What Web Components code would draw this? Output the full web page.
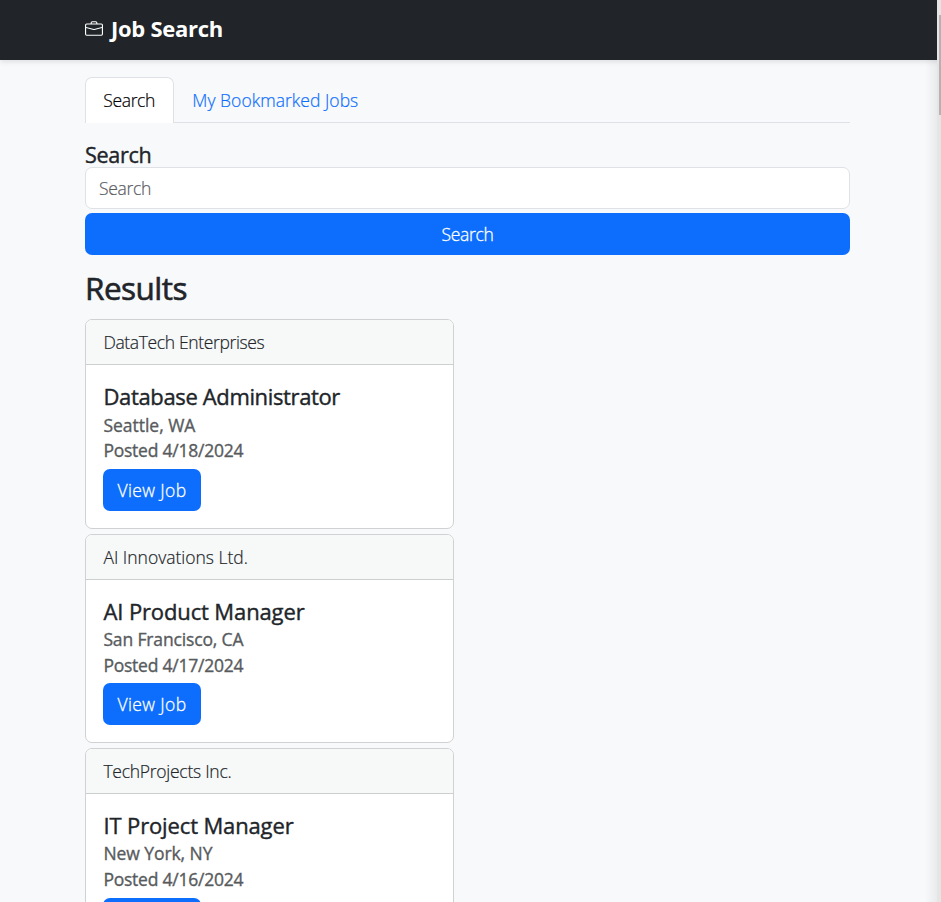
<!DOCTYPE html>
<html lang="en">
<head>
<meta charset="utf-8">
<title>Job Search</title>
<style>
html,body{margin:0;height:902px;overflow:hidden}
body{background:#f8f9fb;color:#212529;font:300 17.5px/27px "Open Sans","Noto Sans",sans-serif;-webkit-text-stroke:.2px}
</style>
</head>
<body>
<job-app></job-app>
<script>
const define = (name, html, setup) => {
  const template = document.createElement('template');
  template.innerHTML = html;
  customElements.define(name, class extends HTMLElement {
    constructor() {
      super();
      this.attachShadow({mode: 'open'}).append(template.content.cloneNode(true));
    }
    connectedCallback() { if (setup) setup(this, this.shadowRoot); }
  });
};

// Label whose letter spacing is tuned so that it spans the given width.
define('fit-label', `<style>
:host{display:inline-block;white-space:nowrap}
span{display:inline-block;white-space:nowrap}
</style><span><slot></slot></span>`, (host, root) => {
  const span = root.querySelector('span');
  const n = host.textContent.trim().length;
  const natural = span.getBoundingClientRect().width;
  const wanted = Number(host.getAttribute('width'));
  if (wanted && natural) {
    const s = (wanted - natural) / n;
    span.style.letterSpacing = s.toFixed(3) + 'px';
  }
});

define('app-navbar', `<style>
:host{display:flex;align-items:center;box-sizing:border-box;height:60px;padding:0 0 3px 85px;background:#212529;color:#fff;font-weight:700;font-size:22px;box-shadow:0 2px 5px rgba(0,0,0,.1);position:relative;-webkit-text-stroke:0}
svg{display:block;width:18px;height:18px;margin-right:8px}
</style>
<svg viewBox="0 0 16 16" fill="#fff"><path d="M6.5 1A1.5 1.5 0 0 0 5 2.5V3H1.5A1.5 1.5 0 0 0 0 4.5v8A1.5 1.5 0 0 0 1.5 14h13a1.5 1.5 0 0 0 1.5-1.5v-8A1.5 1.5 0 0 0 14.5 3H11v-.5A1.500 1.500 0 0 0 9.500 1zm0 1h3a.5.5 0 0 1 .5.5V3H6v-.5a.5.5 0 0 1 .5-.5m1.886 6.914L15 7.151V12.500a.5.5 0 0 1-.5.5h-13a.5.5 0 0 1-.5-.5V7.150l6.614 1.764a1.500 1.500 0 0 0 .772 0M1.500 4h13a.5.5 0 0 1 .5.5v1.616L8.129 7.948a.5.5 0 0 1-.258 0L1 6.116V4.500a.5.5 0 0 1 .5-.5"/></svg>
<slot></slot>`);

define('nav-tabs', `<style>
:host{display:flex;box-sizing:border-box;height:46px;border-bottom:1px solid #dee2e6}
</style><slot></slot>`);

define('nav-tab', `<style>
:host{display:block;box-sizing:border-box;height:46px;padding:9px 18px 9px 17.300px;border:1px solid transparent;border-bottom:0;border-radius:7px 7px 0 0;color:#0d6efd;line-height:27px}
:host([active]){color:#000;background:#fff;border-color:#dee2e6}
</style><slot></slot>`);

define('app-button', `<style>
:host{display:block;box-sizing:border-box;height:42px;border-radius:7px;background:#0d6efd;color:#fff;text-align:center;line-height:43px;-webkit-text-stroke:.3px}
</style><slot></slot>`);

define('search-form', `<style>
:host{display:block}
.title{height:26px;line-height:27px;font-size:21.6px;font-weight:500;-webkit-text-stroke:.4px}
.field{box-sizing:border-box;height:42px;padding:7px 13px;border:1px solid #dee2e6;border-radius:7px;background:#fff;color:#595c5f;line-height:27px;margin-bottom:4px}
</style>
<div class="title"><fit-label width="66.500">Search</fit-label></div>
<div class="field"><fit-label width="52">Search</fit-label></div>
<app-button><fit-label width="52">Search</fit-label></app-button>`);

define('job-card', `<style>
:host{display:block;box-sizing:border-box;width:369px;height:209.800px;border:1px solid #cfd1d3;border-radius:7px;background:#fff;overflow:hidden}
header{box-sizing:border-box;height:45px;padding:9px 17.400px;background:#f7f9f9;border-bottom:1px solid #cccfd0;line-height:27px}
section{padding:18px 17px 0}
.title{height:27px;line-height:27px;margin:0 .5px 4.400px;font-size:22px;font-weight:500;-webkit-text-stroke:.4px}
.sub{height:21.600px;line-height:21.600px;margin:0 .4px 4px;color:#585b5e;font-weight:500;-webkit-text-stroke:.35px}
app-button{width:98px;margin-top:7.200px}
</style>
<header><slot name="company"></slot></header>
<section>
<div class="title"><slot name="title"></slot></div>
<div class="sub"><slot name="place"></slot></div>
<div class="sub"><slot name="date"></slot></div>
<app-button><fit-label width="69">View Job</fit-label></app-button>
</section>`);

define('page-scrollbar', `<style>
:host{position:absolute;top:0;right:0;width:4px;height:902px;background:#e5e5e5}
:host::before{content:"";position:absolute;right:4px;top:60px;bottom:0;width:12px;background:linear-gradient(90deg,rgba(0,0,0,0),rgba(0,0,0,.06))}
i{position:absolute;right:0;top:15px;width:2px;height:100px;background:#b5b3b1}
</style><i></i>`);

define('job-app', `<style>
:host{display:block;position:relative;height:902px;overflow:hidden}
main{width:765px;padding:17px 0 0 85px}
search-form{margin-top:18px}
.results{height:38px;line-height:38px;margin:14px 0 12.400px;font-size:31.500px;font-weight:500;-webkit-text-stroke:.6px}
.list{display:flex;flex-direction:column;gap:4.500px}
</style>
<app-navbar><fit-label width="112">Job Search</fit-label></app-navbar>
<main>
<nav-tabs><nav-tab active><fit-label width="51.700">Search</fit-label></nav-tab><nav-tab><fit-label width="166">My Bookmarked Jobs</fit-label></nav-tab></nav-tabs>
<search-form></search-form>
<div class="results"><fit-label width="102">Results</fit-label></div>
<div class="list">
<job-card><fit-label slot="company" width="161">DataTech Enterprises</fit-label><fit-label slot="title" width="236.500">Database Administrator</fit-label><fit-label slot="place" width="92">Seattle, WA</fit-label><fit-label slot="date" width="140">Posted 4/18/2024</fit-label></job-card>
<job-card><fit-label slot="company" width="144.500">AI Innovations Ltd.</fit-label><fit-label slot="title" width="201">AI Product Manager</fit-label><fit-label slot="place" width="140">San Francisco, CA</fit-label><fit-label slot="date" width="140">Posted 4/17/2024</fit-label></job-card>
<job-card><fit-label slot="company" width="128">TechProjects Inc.</fit-label><fit-label slot="title" width="190">IT Project Manager</fit-label><fit-label slot="place" width="109">New York, NY</fit-label><fit-label slot="date" width="140">Posted 4/16/2024</fit-label></job-card>
</div>
</main>
<page-scrollbar></page-scrollbar>`);
</script>
</body>
</html>
